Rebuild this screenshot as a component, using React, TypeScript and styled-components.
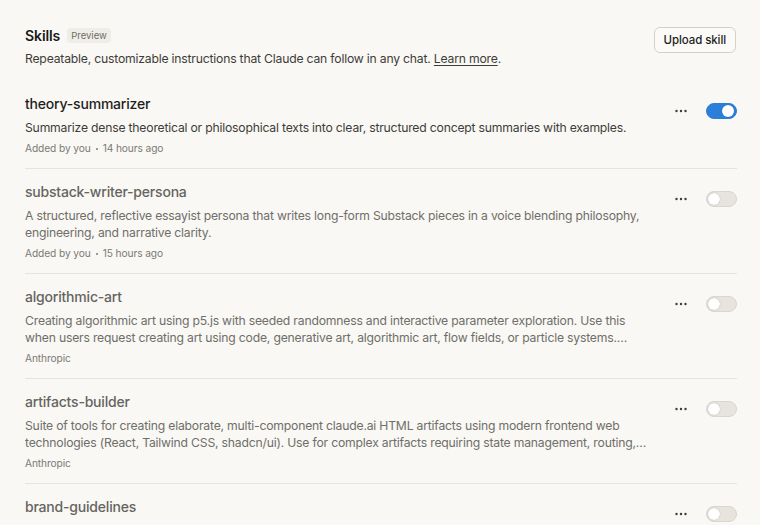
import React, { useState } from 'react';
import styled, { createGlobalStyle } from 'styled-components';

const GlobalStyle = createGlobalStyle`
  html, body {
    margin: 0;
    padding: 0;
    background: #f9f8f4;
  }
  body {
    font-family: Inter, "Noto Sans", sans-serif;
    color: #1f1e1d;
    -webkit-font-smoothing: antialiased;
  }
`;

interface Skill {
  name: string;
  description: string;
  meta: string;
  age?: string;
  enabled: boolean;
}

const skills: Skill[] = [
  {
    name: 'theory-summarizer',
    description:
      'Summarize dense theoretical or philosophical texts into clear, structured concept summaries with examples.',
    meta: 'Added by you',
    age: '14 hours ago',
    enabled: true,
  },
  {
    name: 'substack-writer-persona',
    description:
      'A structured, reflective essayist persona that writes long-form Substack pieces in a voice blending philosophy, engineering, and narrative clarity.',
    meta: 'Added by you',
    age: '15 hours ago',
    enabled: false,
  },
  {
    name: 'algorithmic-art',
    description:
      'Creating algorithmic art using p5.js with seeded randomness and interactive parameter exploration. Use this when users request creating art using code, generative art, algorithmic art, flow fields, or particle systems. Create original algorithmic art rather than copying existing artists.',
    meta: 'Anthropic',
    enabled: false,
  },
  {
    name: 'artifacts-builder',
    description:
      'Suite of tools for creating elaborate, multi-component claude.ai HTML artifacts using modern frontend web technologies (React, Tailwind CSS, shadcn/ui). Use for complex artifacts requiring state management, routing, or shadcn/ui components.',
    meta: 'Anthropic',
    enabled: false,
  },
  {
    name: 'brand-guidelines',
    description:
      "Applies Anthropic's official brand colors and typography to any sort of artifact that may benefit from having Anthropic's look-and-feel.",
    meta: 'Anthropic',
    enabled: false,
  },
];

const Page = styled.div`
  padding: 24px 23px 0 25px;
  height: 525px;
  box-sizing: border-box;
  overflow: hidden;
`;

const Header = styled.header`
  display: flex;
  justify-content: space-between;
  align-items: flex-start;
`;

const TitleRow = styled.div`
  display: flex;
  align-items: center;
  gap: 7px;
  height: 22px;
`;

const Title = styled.h1`
  margin: 0;
  font-size: 14px;
  font-weight: 600;
  letter-spacing: -0.1px;
  color: #1a1918;
`;

const Badge = styled.span`
  font-size: 9.5px;
  color: #6f6e69;
  background: #efede7;
  border-radius: 4px;
  padding: 2px 4px;
  line-height: 11px;
`;

const Subtitle = styled.p`
  margin: 4px 0 0;
  font-size: 12.2px;
  letter-spacing: -0.2px;
  line-height: 18px;
  color: #3d3c38;

  a {
    color: #3d3c38;
    text-decoration: underline;
    text-underline-offset: 2px;
  }
`;

const UploadButton = styled.button`
  margin-top: 3px;
  margin-right: 1px;
  height: 26px;
  padding: 0 9px;
  font-family: inherit;
  font-size: 11.5px;
  font-weight: 500;
  letter-spacing: -0.1px;
  color: #1f1e1d;
  background: #fbfaf7;
  border: 1px solid #d3d1c9;
  border-radius: 6px;
  cursor: pointer;
`;

const List = styled.ul`
  list-style: none;
  margin: 13px 0 0;
  padding: 0;
`;

const Row = styled.li`
  display: flex;
  justify-content: space-between;
  align-items: flex-start;
  padding: 12px 0 12px;
  border-bottom: 1px solid #e6e4dd;

  &:last-child {
    border-bottom: none;
  }
`;

const Info = styled.div`
  max-width: 625px;
`;

const Name = styled.div<{ $enabled: boolean }>`
  font-size: 14px;
  font-weight: 500;
  letter-spacing: -0.2px;
  line-height: 22px;
  color: ${(p) => (p.$enabled ? '#1f1e1d' : '#65645f')};
`;

const Description = styled.div<{ $enabled: boolean }>`
  margin-top: 4px;
  max-height: 34px;
  font-size: 12.2px;
  letter-spacing: -0.2px;
  line-height: 17px;
  color: ${(p) => (p.$enabled ? '#3d3c38' : '#6f6e69')};
  display: -webkit-box;
  -webkit-line-clamp: 2;
  -webkit-box-orient: vertical;
  overflow: hidden;
`;

const Meta = styled.div`
  display: flex;
  align-items: center;
  gap: 5px;
  margin-top: 4px;
  font-size: 10.2px;
  letter-spacing: -0.1px;
  line-height: 16px;
  color: #7b7a74;
`;

const Sep = styled.span`
  width: 2px;
  height: 2px;
  border-radius: 50%;
  background: #7b7a74;
  margin-top: 2px;
`;

const Controls = styled.div`
  display: flex;
  align-items: center;
  gap: 18px;
  margin-top: 10px;
  flex-shrink: 0;
`;

const MoreButton = styled.button`
  display: flex;
  align-items: center;
  justify-content: center;
  width: 14px;
  height: 16px;
  padding: 0;
  border: none;
  background: transparent;
  color: #3d3c38;
  cursor: pointer;
`;

const Track = styled.button<{ $on: boolean }>`
  position: relative;
  width: 31px;
  height: 16px;
  padding: 0;
  border-radius: 999px;
  border: 1px solid ${(p) => (p.$on ? '#2b7fd9' : '#d8d6ce')};
  background: ${(p) => (p.$on ? '#2b7fd9' : '#e6e4dd')};
  cursor: pointer;
  box-sizing: border-box;
`;

const Knob = styled.span<{ $on: boolean }>`
  position: absolute;
  top: 1px;
  left: ${(p) => (p.$on ? '15px' : '1px')};
  width: 12px;
  height: 12px;
  border-radius: 50%;
  background: #fff;
  box-shadow: 0 0 1px rgba(0, 0, 0, 0.35);
`;

function Dots(): React.ReactElement {
  return (
    <svg width="12" height="4" viewBox="0 0 12 4" fill="currentColor">
      <circle cx="1.5" cy="2" r="1.2" />
      <circle cx="6" cy="2" r="1.2" />
      <circle cx="10.5" cy="2" r="1.2" />
    </svg>
  );
}

function SkillRow({ skill }: { skill: Skill }): React.ReactElement {
  const [on, setOn] = useState(skill.enabled);
  return (
    <Row>
      <Info>
        <Name $enabled={on}>{skill.name}</Name>
        <Description $enabled={on}>{skill.description}</Description>
        <Meta>
          <span>{skill.meta}</span>
          {skill.age && (
            <>
              <Sep />
              <span>{skill.age}</span>
            </>
          )}
        </Meta>
      </Info>
      <Controls>
        <MoreButton aria-label="More options">
          <Dots />
        </MoreButton>
        <Track $on={on} onClick={() => setOn(!on)} aria-pressed={on}>
          <Knob $on={on} />
        </Track>
      </Controls>
    </Row>
  );
}

export default function App(): React.ReactElement {
  return (
    <>
      <GlobalStyle />
      <Page>
        <Header>
          <div>
            <TitleRow>
              <Title>Skills</Title>
              <Badge>Preview</Badge>
            </TitleRow>
            <Subtitle>
              Repeatable, customizable instructions that Claude can follow in any chat.{' '}
              <a href="#">Learn more</a>.
            </Subtitle>
          </div>
          <UploadButton>Upload skill</UploadButton>
        </Header>
        <List>
          {skills.map((s) => (
            <SkillRow key={s.name} skill={s} />
          ))}
        </List>
      </Page>
    </>
  );
}
